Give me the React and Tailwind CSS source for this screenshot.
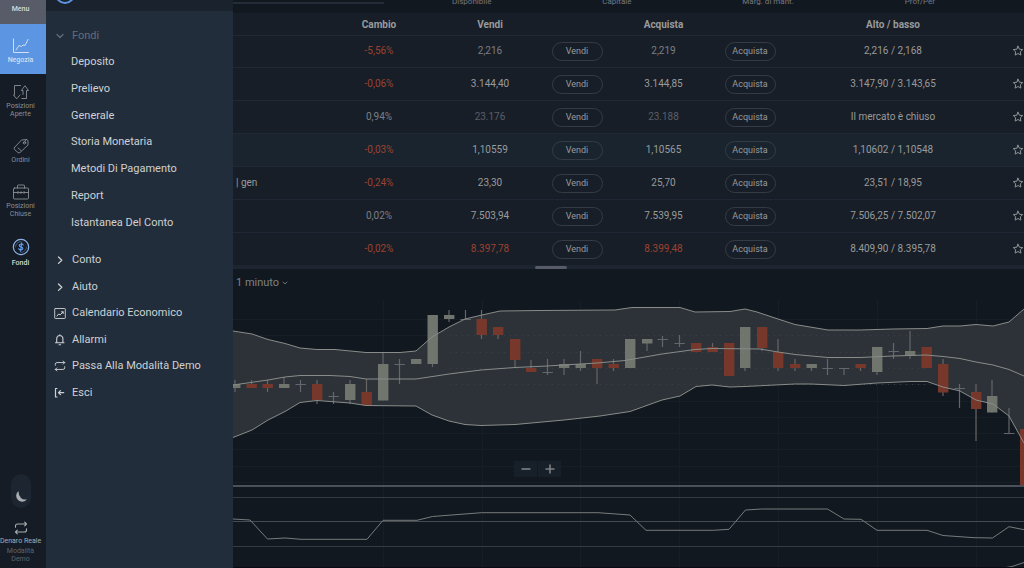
import React from "react";

/* [center x, wick top, body top, body bottom, wick bottom, kind]  u = up, d = down, x = doji */
const CANDLES = [
  [235, 380, 384, 388, 392, "u"], [251.5, 380, 384, 388, 388, "d"], [267.5, 380, 384, 388, 392, "d"],
  [284, 377, 384, 388, 388, "u"], [300.5, 380, 384, 385, 392, "x"], [317, 380, 384, 400, 404, "d"],
  [333.5, 392, 396, 397, 404, "x"], [350, 380, 384, 400, 404, "u"], [366.5, 379, 392, 405, 405, "d"],
  [383, 352, 364, 400.5, 400.5, "u"], [399.5, 359, 364, 365, 384, "x"], [416, 359, 359, 364, 364, "u"],
  [432.5, 315, 315, 364, 367, "u"], [449, 310, 315, 319, 322, "u"], [465.5, 310, 319, 320, 320, "x"],
  [481.5, 310, 319, 335, 339, "d"], [498, 327, 327, 335, 339, "d"], [515, 339, 339, 360, 367, "d"],
  [531, 360, 368, 372, 372, "d"], [547.5, 359, 372, 373, 375, "x"], [564, 359, 364, 368, 375, "u"],
  [580.5, 351, 364, 368, 371, "u"], [597, 359, 359, 368, 384, "d"], [613.5, 359, 364, 368, 371, "d"],
  [630, 339, 339, 368, 368, "u"], [647, 339, 339, 343.5, 351, "u"], [662.5, 336, 339, 340, 347, "x"],
  [679.5, 335, 343, 344, 347, "x"], [696, 343, 343, 352, 352, "d"], [712.5, 343, 347, 352, 352, "d"],
  [729, 343, 343, 376, 376, "d"], [745, 327, 327, 368, 371, "u"], [762, 327, 327, 348, 351, "d"],
  [778, 339, 352, 368, 371, "d"], [795, 359, 364, 368, 371, "d"], [811.5, 364, 364, 368, 371, "u"],
  [827.5, 359, 368, 369, 375, "x"], [844, 368, 368, 369, 375, "x"], [860.5, 364, 364, 368, 371, "d"],
  [877, 347, 347, 372, 375, "u"], [893.5, 343, 351, 352, 359, "x"], [910, 331, 351, 355.5, 359, "u"],
  [926.5, 347, 347, 368, 368, "d"], [943, 359, 364, 392.5, 396, "d"], [959.5, 384, 388, 389, 408, "x"],
  [976, 384, 392, 409, 441, "d"], [992, 380, 396, 412.5, 412.5, "u"], [1009, 408, 433, 434, 434, "x"],
  [1025, 429, 429, 486, 486, "d"],
];

const UPPER = "233,331 252,334 268,339.5 285,343.5 300,348 317,349.5 335,349.5 366,352.5 400,352.5 416,351 432,337 449,327 465,319 482,315 500,311 540,310.5 615,310 632,307.5 680,307.5 695,312 730,311.5 745,309 757,312 778,319 795,324.5 828,330 860,330 893,329 927,328.5 943,326 960,326 976,324.5 993,326 1009,322 1024,309";
const MIDDLE = "233,385 268,380 285,377 300,375.5 330,375.5 350,376.5 366,379 416,379 449,374 481,370 515,367.5 547,366 597,363 625,360.5 662,354 695,349.5 712,348.5 760,349 778,352 795,354.5 828,357.5 860,357.5 893,356 926,355 943,356.5 960,358.5 976,362 993,365 1009,369.5 1024,376";
const LOWER = "233,437.5 252,430 268,420 285,411.5 300,402.5 317,400.5 350,403 366,405.5 416,406 432,415 449,421 465,424.5 481,425.5 515,424.5 564,420 600,416 630,411.5 662,400 680,396 696,386.5 712,385 730,387 745,386.5 795,384 811,384 844,385.5 877,383 910,381.5 927,381.5 943,387 960,391 976,400 993,404 1009,416 1024,443";
const OSCILLATOR = "233,519 250,520 267.5,539 285,538 301,539.3 367,539.3 383,520.3 417,520.3 432.5,516.5 481.5,512.7 598,512.7 630,515 646,530.3 713.5,530.3 729,529.3 745.5,510 761.5,509 827.5,509 844,519 861,519.3 877,530.3 927,530.3 943,535.5 974,537.7 992.5,538 1009,526.7 1024,529.7";
const BAND = UPPER + " " + LOWER.split(" ").reverse().join(" ");

const GRID_X = [383, 482, 580, 679, 778, 877, 976];
const GRID_Y = [319, 335, 352, 368, 384, 401, 417, 433, 449, 466, 482];

function Chart() {
  return (
    <svg viewBox="233 297 791 271" className="block h-auto w-full" role="img" aria-label="Grafico a candele">
      <g stroke="#171e26" strokeWidth="1">
        {GRID_X.map((x) => <line key={x} x1={x + 0.5} x2={x + 0.5} y1="300" y2="567" />)}
        {GRID_Y.map((y) => <line key={y} x1="233" x2="1024" y1={y + 0.5} y2={y + 0.5} />)}
      </g>
      <polygon points={BAND} fill="#2d3238" />
      <g stroke="#3b4046" strokeWidth="1" strokeDasharray="1 5">
        {[335.5, 352.5, 368.5, 384.5].map((y) => <line key={y} x1="450" x2="930" y1={y} y2={y} />)}
      </g>
      {CANDLES.map(([x, wt, bt, bb, wb, kind]) => (
        <g key={x}>
          <line x1={x} x2={x} y1={wt} y2={wb} stroke={kind === "d" ? "#6a6563" : "#63676d"} strokeWidth="1.2" />
          <rect x={x - 5} y={bt} width="10.4" height={bb - bt} fill={kind === "d" ? "#77382b" : kind === "u" ? "#70756e" : "#63676d"} />
        </g>
      ))}
      <g fill="none" stroke="#898c88" strokeWidth="1">
        <polyline points={UPPER} />
        <polyline points={MIDDLE} />
        <polyline points={LOWER} />
      </g>
      <rect x="233" y="485" width="791" height="2" fill="#4b515b" />
      <g fill="#353b44">
        <rect x="233" y="497" width="791" height="1" />
        <rect x="233" y="521" width="791" height="1" fill="#464b53" />
        <rect x="233" y="546" width="791" height="1" />
      </g>
      <polyline points={OSCILLATOR} fill="none" stroke="#777b7b" strokeWidth="1" />
      <polyline points="1006,567.5 1012,566.5 1024,562.5" fill="none" stroke="#777b7b" strokeWidth="1" />
      <rect x="233" y="567" width="791" height="1" fill="#080b11" />
    </svg>
  );
}

const stroke = { fill: "none", stroke: "currentColor", strokeLinecap: "round", strokeLinejoin: "round", "aria-hidden": true };

const TradeIcon = () => (
  <svg viewBox="0 0 16 16" className="size-4" {...stroke} strokeWidth="1">
    <path d="M.5 1v13.5h15M3 12l3-4.500 2.500 1 1.500-1.500 2 .5 3-6" />
  </svg>
);
const PositionsIcon = () => (
  <svg viewBox="0 0 16 16" className="size-4" {...stroke} strokeWidth="0.9">
    <path d="M7.500 1.500H1.500v9.500H.5l3.200 3.800 3.300-3.800M8.800 14.500h4.700V6.500h2L12 1.700 8.300 6.500h1.700v4" />
  </svg>
);
const TagIcon = () => (
  <svg viewBox="0 0 16 16" className="size-4" {...stroke} strokeWidth="0.9">
    <path d="M1.500 9.500 8.500 2l5-.5 1.500 1v4.500l-8 7.500q-1 .8-2 0l-3.500-3q-.8-1 0-2zM13.500 1.500l-3 3.500M5 10l3 2.500" />
    <circle cx="11.500" cy="4.800" r="1.200" />
  </svg>
);
const BriefcaseIcon = () => (
  <svg viewBox="0 0 16 16" className="size-4" {...stroke} strokeWidth="0.9">
    <rect x=".5" y="4" width="15" height="11" rx="1" />
    <path d="M4.500 4V1.800q0-.8.8-.8h5.400q.8 0 .8.800V4M.5 8.500h4.500M6 8.500h4M11 8.500h4.500M5 7.500v2M8 7.700v1.800M11 7.500v2" />
  </svg>
);
const CoinIcon = () => (
  <svg viewBox="0 0 18 18" className="size-[18px]" {...stroke} strokeWidth="1">
    <circle cx="9" cy="9" r="7.700" stroke="#8db4e6" strokeWidth="1.200" />
    <path d="M3.500 9A5.500 5.500 0 0 1 9 3.500M14.500 9A5.500 5.500 0 0 1 9 14.500" stroke="#3d5878" />
    <path d="M11.200 7q-.6-1-2-1-1.900 0-2 1.300 0 1.200 1.800 1.600 2 .5 1.800 1.800-.2 1.300-2 1.300-1.600 0-2.100-1.200M9.700 4.800l-1.200 8.400" stroke="#5f9ae8" strokeWidth="1.200" />
  </svg>
);
const SwapIcon = ({ className }) => (
  <svg viewBox="0 0 14 14" className={className} {...stroke} strokeWidth="1.100">
    <path d="M1.500 6.200V5q0-2 2-2H12.500M10.700 1.200l1.800 1.800-1.800 1.800M12.500 7.800V9q0 2-2 2H1.500M3.300 9.200 1.500 11l1.800 1.800" />
  </svg>
);
const ChevronRight = () => (
  <svg viewBox="0 0 12 12" className="size-3" {...stroke} strokeWidth="1.300"><path d="m4.500 3 3.300 3.200-3.300 3.200" /></svg>
);
const ChevronDown = ({ className }) => (
  <svg viewBox="0 0 12 12" className={className} {...stroke} strokeWidth="1.300"><path d="m3 4.500 3 3 3-3" /></svg>
);
const CalendarIcon = () => (
  <svg viewBox="0 0 12 12" className="size-3" {...stroke} strokeWidth="1">
    <rect x=".7" y="1.500" width="10.600" height="10" rx=".6" strokeWidth=".9" />
    <path d="M3 9l1.700-2 1.500.8L9 5M7.500 4.800H9.200v1.700" />
  </svg>
);
const BellIcon = () => (
  <svg viewBox="0 0 12 12" className="size-3" {...stroke} strokeWidth="1.100">
    <path d="M1.500 8.700h8.500M2.700 8.500V5q0-3.300 3.100-3.500Q8.900 1.700 8.900 5v3.500M5 10.700h1.600M5.800.8v.5" />
  </svg>
);
const ExitIcon = () => (
  <svg viewBox="0 0 12 12" className="size-3" {...stroke} strokeWidth="1.200">
    <path d="M3 1.500H1.500v8.500H3M9.700 5.700H4.500M6.500 3.700 4.500 5.700l2 2" />
  </svg>
);
const StarIcon = () => (
  <svg viewBox="0 0 12 12" className="size-3" {...stroke} strokeWidth="1">
    <path d="m6 1.200 1.400 3 3.300.4-2.400 2.200.6 3.300L6 8.500l-2.900 1.600.6-3.300L1.300 4.600l3.300-.4z" />
  </svg>
);

function NavItem({ icon, lines, className }) {
  return (
    <button type="button" className={"flex w-full flex-col items-center pr-[5px] text-[7px] leading-2 " + className}>
      {icon}
      {lines.map((l) => <span key={l} className="whitespace-nowrap">{l}</span>)}
    </button>
  );
}

function Rail() {
  return (
    <nav aria-label="Principale" className="flex w-[46px] shrink-0 flex-col bg-[#151c25] pb-[5px] text-[#8b8f93]">
      <button type="button" className="h-6 bg-[#575c68] pb-[6px] pr-[5px] text-[7px] font-medium text-[#d5d8dc]">Menu</button>
      <NavItem icon={<TradeIcon />} lines={["Negozia"]} className="h-[50px] justify-end gap-[2px] bg-[#5c95e1] pb-[10px] font-medium text-[#d3dff0]" />
      <div className="mt-[10px] flex flex-col gap-5">
        <NavItem icon={<span className="mb-[2px]"><PositionsIcon /></span>} lines={["Posizioni", "Aperte"]} className="" />
        <NavItem icon={<span className="mb-[2px]"><TagIcon /></span>} lines={["Ordini"]} className="" />
        <NavItem icon={<span className="mb-[2px]"><BriefcaseIcon /></span>} lines={["Posizioni", "Chiuse"]} className="" />
        <NavItem icon={<span className="mb-[3px]"><CoinIcon /></span>} lines={["Fondi"]} className="font-medium text-[#d5d8dc]" />
      </div>
      <div className="mt-auto mb-[13px] flex justify-center pr-[5px]">
        <button type="button" aria-label="Tema scuro" className="flex h-[34px] w-5 items-end justify-center rounded-full bg-[#1c2530] pb-1 text-[#a9adb1]">
          <svg viewBox="0 0 14 14" className="size-[14px]" aria-hidden="true"><path fill="currentColor" d="M4.500 1A6 6 0 1 0 13 9.300Q9.500 10.300 7 8 4.300 5.300 4.500 1z" /></svg>
        </button>
      </div>
      <button type="button" className="flex flex-col items-center pr-[5px] text-[7px] leading-2 text-[#5f646b]">
        <SwapIcon className="mb-[2px] size-[14px] text-[#a9adb1]" />
        <span className="mb-[2px] whitespace-nowrap text-[#a9adb1]">Denaro Reale</span>
        <span>Modalità</span>
        <span>Demo</span>
      </button>
    </nav>
  );
}

const FUNDS = ["Deposito", "Prelievo", "Generale", "Storia Monetaria", "Metodi Di Pagamento", "Report", "Istantanea Del Conto"];
const LINKS = [
  [<ChevronRight />, "Conto"],
  [<ChevronRight />, "Aiuto"],
  [<CalendarIcon />, "Calendario Economico"],
  [<BellIcon />, "Allarmi"],
  [<SwapIcon className="size-3" />, "Passa Alla Modalità Demo"],
  [<ExitIcon />, "Esci"],
];

function Drawer() {
  return (
    <aside className="w-[187px] shrink-0 bg-[#222d3b] text-[11px] leading-4 text-[#ced1d3]">
      <div className="flex h-[11px] items-start overflow-hidden bg-[#1a222d] pl-[9px]">
        <span className="-mt-4 size-5 shrink-0 rounded-full border-2 border-[#5c95e1]" />
      </div>
      <button type="button" className="mt-3 flex h-[26px] w-full items-center gap-[6px] pl-2 text-[#646b78]">
        <ChevronDown className="size-3" />Fondi
      </button>
      <ul className="grid h-[187px] grid-rows-7">
        {FUNDS.map((t) => (
          <li key={t} className="flex items-center pl-[25px]"><a href="#fondi">{t}</a></li>
        ))}
      </ul>
      <ul className="mt-[11px] grid h-[159px] grid-rows-6">
        {LINKS.map(([icon, t]) => (
          <li key={t} className="flex items-center pl-2"><a href="#menu" className="flex items-center gap-[6px]">{icon}{t}</a></li>
        ))}
      </ul>
    </aside>
  );
}

const G = "text-[#989b9b]", M = "text-[#5a5f67]", N = "text-[#7a7f85]", R = "text-[#9c4230]";
const ROWS = [
  ["", "-5,56%", R, "2,216", N, "2,219", N, "2,216 / 2,168"],
  ["", "-0,06%", R, "3.144,40", G, "3.144,85", G, "3.147,90 / 3.143,65"],
  ["", "0,94%", N, "23.176", M, "23.188", M, "Il mercato è chiuso"],
  ["", "-0,03%", R, "1,10559", G, "1,10565", G, "1,10602 / 1,10548"],
  ["| gen", "-0,24%", R, "23,30", G, "25,70", G, "23,51 / 18,95"],
  ["", "0,02%", N, "7.503,94", G, "7.539,95", G, "7.506,25 / 7.502,07"],
  ["", "-0,02%", R, "8.397,78", R, "8.399,48", R, "8.409,90 / 8.395,78"],
];

function Pill({ children }) {
  return (
    <button type="button" className="mx-auto block h-[19px] w-[51px] rounded-full border border-[#343b44] text-[9px] leading-4 text-[#989b9b]">
      {children}
    </button>
  );
}

function Quotes() {
  return (
    <table className="h-[252px] w-full table-fixed border-collapse bg-[#181e27] text-center text-[10px] leading-3">
      <colgroup>
        <col /><col className="w-[110px]" /><col className="w-[112px]" /><col className="w-[62px]" />
        <col className="w-[111px]" /><col className="w-[62px]" /><col className="w-[224px]" /><col className="w-[19px]" />
      </colgroup>
      <thead>
        <tr className="h-[22px] text-[#989b9b] *:pt-[2px]">
          <td /><th scope="col">Cambio</th><th scope="col">Vendi</th><td />
          <th scope="col">Acquista</th><td /><th scope="col">Alto / basso</th><td />
        </tr>
      </thead>
      <tbody>
        {ROWS.map(([name, chg, cc, sell, sc, buy, bc, range], i) => (
          <tr key={i} className={"border-t border-[#1f2834] " + (i === 3 ? "bg-[#1a242f]" : "")}>
            <td className={"whitespace-nowrap pl-[3px] text-left " + G}>{name}</td>
            <td className={cc}>{chg}</td>
            <td className={sc}>{sell}</td>
            <td><Pill>Vendi</Pill></td>
            <td className={bc}>{buy}</td>
            <td><Pill>Acquista</Pill></td>
            <td className={G}>{range}</td>
            <td><button type="button" aria-label="Aggiungi ai preferiti" className="ml-auto block text-[#8f9394]"><StarIcon /></button></td>
          </tr>
        ))}
      </tbody>
    </table>
  );
}

export default function App() {
  return (
    <div className="flex min-h-screen overflow-hidden bg-[#111820] font-['Roboto',sans-serif]">
      <Rail />
      <Drawer />
      <main className="min-w-0 flex-1">
        <div className="flex h-[13px] items-start overflow-hidden text-[8px] leading-3 text-[#747980]">
          <div className="mt-[2px] h-[2px] w-[151px] bg-[#242c37]" />
          <div className="-mt-1 flex flex-1 justify-between pl-[68px] pr-[89px]">
            <span>Disponibile</span><span>Capitale</span><span>Marg. di mant.</span><span>Prof/Per</span>
          </div>
        </div>
        <Quotes />
        <div className="flex h-1 items-center bg-[#1c2530] pl-[302px]">
          <div className="h-[3px] w-8 rounded-full bg-[#575c68]" />
        </div>
        <div className="flex h-7 items-center pl-[3px]">
          <button type="button" className="flex items-center gap-[2px] text-[11px] leading-4 text-[#7d8185]">
            1 minuto<ChevronDown className="size-2" />
          </button>
        </div>
        <div className="relative">
          <Chart />
          <div className="absolute left-[281px] top-[164px] flex gap-px text-[#7d8185]">
            <button type="button" aria-label="Riduci" className="flex h-4 w-[23px] items-center justify-center bg-[#171f28]">
              <svg viewBox="0 0 10 10" className="size-[10px]" aria-hidden="true"><path d="M.5 5h9" stroke="currentColor" strokeWidth="1.600" /></svg>
            </button>
            <button type="button" aria-label="Ingrandisci" className="flex h-4 w-[23px] items-center justify-center bg-[#171f28]">
              <svg viewBox="0 0 10 10" className="size-[10px]" aria-hidden="true"><path d="M.5 5h9M5 .5v9" stroke="currentColor" strokeWidth="1.600" /></svg>
            </button>
          </div>
        </div>
      </main>
    </div>
  );
}
